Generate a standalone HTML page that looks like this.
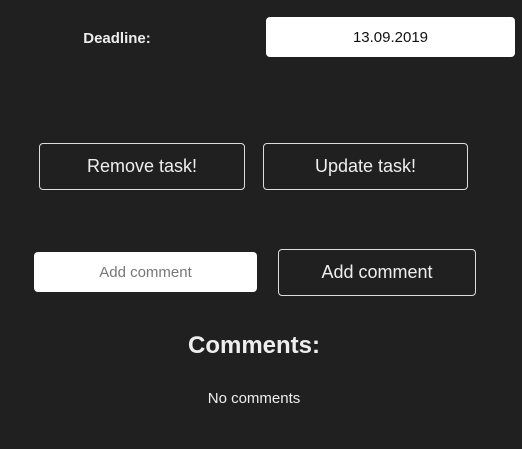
<!DOCTYPE html>
<html><head><style>
body{margin:0;width:522px;height:449px;background:#202020;font-family:"Liberation Sans",sans-serif;position:relative;overflow:hidden;color:#eee}
.a{position:absolute;box-sizing:border-box;display:flex;align-items:center;justify-content:center}
.w{background:#fff;border-radius:4px}
.b{border:1px solid #ddd;border-radius:4px;font-size:18px;color:#eee}
</style></head><body>
<div class="a" style="left:60px;top:28px;width:114px;height:20px;font-weight:bold;font-size:15px">Deadline:</div>
<div class="a w" style="left:266px;top:17px;width:249px;height:40px;font-size:15px;color:#111">13.09.2019</div>
<div class="a b" style="left:39px;top:143px;width:206px;height:47px">Remove task!</div>
<div class="a b" style="left:263px;top:143px;width:205px;height:47px">Update task!</div>
<div class="a w" style="left:34px;top:252px;width:223px;height:40px;font-size:15px;color:#777">Add comment</div>
<div class="a b" style="left:278px;top:249px;width:198px;height:47px">Add comment</div>
<div class="a" style="left:154px;top:333px;width:200px;height:26px;font-weight:bold;font-size:24px">Comments:</div>
<div class="a" style="left:154px;top:389px;width:200px;height:18px;font-size:15px">No comments</div>
</body></html>
